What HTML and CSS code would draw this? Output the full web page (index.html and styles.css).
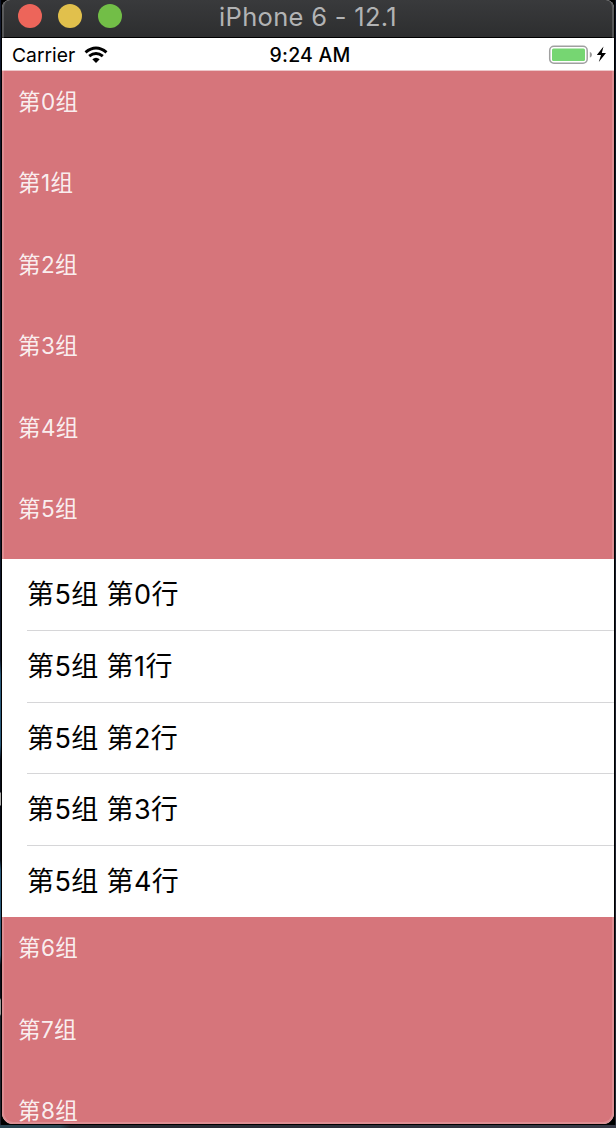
FILE: index.html
```
<!DOCTYPE html>
<html lang="zh-CN">
<head>
<meta charset="utf-8">
<title>iPhone 6 - 12.1</title>
<link rel="stylesheet" href="styles.css">
</head>
<body>
<main class="window">
  <header class="titlebar">
    <div class="lights"><i class="light red"></i><i class="light yellow"></i><i class="light green"></i></div>
    <h1 class="title">iPhone 6 - 12.1</h1>
  </header>
  <div class="status">
    <div class="carrier">
      <span class="carrier-name">Carrier</span>
      <svg class="wifi" width="24" height="18" viewBox="0 0 24 18">
        <g fill="none" stroke="#000" stroke-width="3"><path d="M1.5 6.3Q12 -2.2 22.5 6.3"/><path d="M5.2 10.2Q12 4.7 18.8 10.2"/></g>
        <path d="M8.3 13.2Q12 10.2 15.7 13.2L12 17Z"/>
      </svg>
    </div>
    <time class="time">9:24 AM</time>
    <div class="power">
      <svg width="60" height="20" viewBox="0 0 60 20">
        <rect x="1.7" y="1.2" width="37.5" height="17" rx="4.2" fill="#fff" stroke="#a0a0a0" stroke-width="1.5"/>
        <rect x="4" y="3.5" width="33" height="12.5" rx="1.5" fill="#76d672"/>
        <path d="M41.8 6.7Q44 7.8 44 9.7T41.8 12.7Z" fill="#999"/>
        <path d="M55.5 1.6L48.8 10H53L50.8 17L58 8H53.8Z"/>
      </svg>
    </div>
  </div>
  <section class="group">第0组</section>
  <section class="group">第1组</section>
  <section class="group">第2组</section>
  <section class="group">第3组</section>
  <section class="group">第4组</section>
  <section class="group">第5组</section>
  <ul class="rows">
    <li class="row">第5组 第0行</li>
    <li class="row">第5组 第1行</li>
    <li class="row">第5组 第2行</li>
    <li class="row">第5组 第3行</li>
    <li class="row">第5组 第4行</li>
  </ul>
  <section class="group">第6组</section>
  <section class="group">第7组</section>
  <section class="group">第8组</section>
</main>
</body>
</html>
```
FILE: styles.css
```
* { box-sizing: border-box; }
body {
  margin: 0;
  height: 1128px;
  padding: 0 2px 4px;
  overflow: hidden;
  background:
    linear-gradient(90deg, #2b4552 0 60px, #25272f 70px, #383a47 100%) 0 1125px / 616px 3px no-repeat,
    linear-gradient(#10172b 0 660px, #29597a 675px 745px, #080c18 760px 792px, #aaa 793px 805px, #080c18 806px 860px, #29597a 870px 955px, #0b0e1a 965px 998px, #999 1000px 1014px, #20222d 1016px) 0 0 / 1px 1128px no-repeat,
    linear-gradient(#0c1220, #262833) 615px 0 / 1px 1128px no-repeat,
    #000;
  font-family: Inter, "Noto Sans CJK SC", sans-serif;
}
.window {
  position: relative;
  height: 1124px;
  overflow: hidden;
  border-radius: 8px 8px 11px 11px;
  background: #fff;
  box-shadow: 0 0 0 1px #000;
}
.window::after {
  content: "";
  position: absolute;
  inset: 0;
  border: 2px solid rgba(255, 255, 255, .18);
  border-top: 0;
  border-radius: inherit;
}
.titlebar {
  display: grid;
  grid-template-columns: 1fr auto 1fr;
  height: 38px;
  border-bottom: 1px solid #000;
  background: linear-gradient(#393a3c, #2d2e2f);
}
.lights { display: flex; gap: 16px; padding: 4px 0 0 16px; }
.light { width: 24px; height: 24px; border-radius: 50%; }
.red { background: #ed655a; }
.yellow { background: #e1c04c; }
.green { background: #72be47; }
.title {
  margin: 0;
  color: #b2b3b4;
  font-size: 25.5px;
  font-weight: 400;
  letter-spacing: .3px;
  line-height: 34px;
  white-space: nowrap;
}
.status {
  display: grid;
  grid-template-columns: 1fr auto 1fr;
  height: 33px;
  border-bottom: 1px solid #edc7ca;
  line-height: 34px;
}
.carrier { display: flex; align-items: center; gap: 9px; padding-left: 10px; font-size: 19.3px; }
.wifi { margin-top: -1px; }
.time { padding-left: 4px; font-size: 19.5px; font-weight: 500; letter-spacing: .2px; }
.power { display: flex; justify-content: flex-end; align-items: center; padding: 0 6px 0 0; }
.group {
  height: 81.4px;
  padding: 13px 0 0 16px;
  background: #d6757b;
  color: rgba(255, 255, 255, .9);
  font-size: 22.5px;
  font-weight: 400;
  letter-spacing: .4px;
  line-height: 36px;
}
.rows { margin: 0; padding: 0 0 0 25px; list-style: none; background: #fff; }
.row {
  height: 71.6px;
  border-bottom: 1px solid #d6d6d8;
  color: #000;
  font-size: 27px;
  letter-spacing: .4px;
  line-height: 71px;
}
.row:last-child { border-bottom: 0; }
```
